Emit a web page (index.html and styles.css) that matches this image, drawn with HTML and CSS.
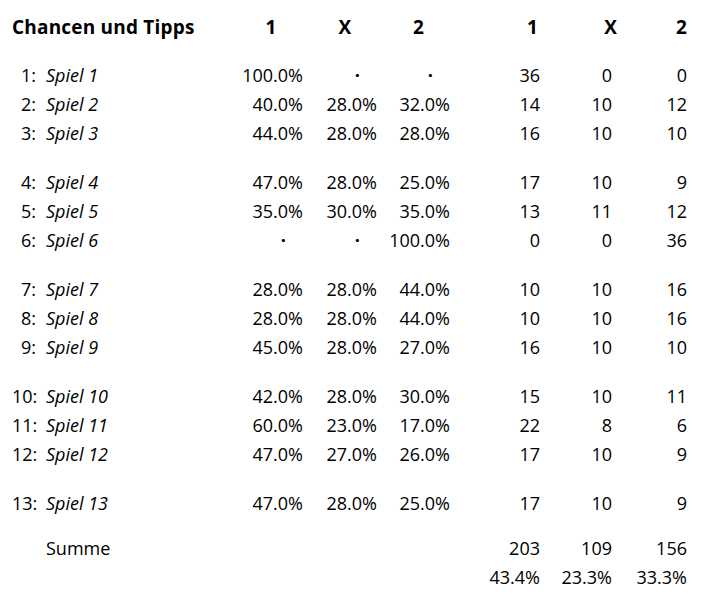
FILE: index.html
```html
<!DOCTYPE html>
<html lang="de">
<head>
<meta charset="utf-8">
<title>Chancen und Tipps</title>
<link rel="stylesheet" href="styles.css">
</head>
<body>
<div class="sheet">
  <div class="row head">
    <div class="title">Chancen und Tipps</div>
    <div class="pct">1</div><div class="pct">X</div><div class="pct">2</div>
    <div class="cnt h1">1</div><div class="cnt hx">X</div><div class="cnt">2</div>
  </div>

  <div class="group">
    <div class="row"><div class="num">1:</div><div class="name">Spiel 1</div><div class="pct">100.0%</div><div class="pct dot">·</div><div class="pct dot">·</div><div class="cnt">36</div><div class="cnt">0</div><div class="cnt">0</div></div>
    <div class="row"><div class="num">2:</div><div class="name">Spiel 2</div><div class="pct">40.0%</div><div class="pct">28.0%</div><div class="pct">32.0%</div><div class="cnt">14</div><div class="cnt">10</div><div class="cnt">12</div></div>
    <div class="row"><div class="num">3:</div><div class="name">Spiel 3</div><div class="pct">44.0%</div><div class="pct">28.0%</div><div class="pct">28.0%</div><div class="cnt">16</div><div class="cnt">10</div><div class="cnt">10</div></div>
  </div>

  <div class="group">
    <div class="row"><div class="num">4:</div><div class="name">Spiel 4</div><div class="pct">47.0%</div><div class="pct">28.0%</div><div class="pct">25.0%</div><div class="cnt">17</div><div class="cnt">10</div><div class="cnt">9</div></div>
    <div class="row"><div class="num">5:</div><div class="name">Spiel 5</div><div class="pct">35.0%</div><div class="pct">30.0%</div><div class="pct">35.0%</div><div class="cnt">13</div><div class="cnt">11</div><div class="cnt">12</div></div>
    <div class="row"><div class="num">6:</div><div class="name">Spiel 6</div><div class="pct dot">·</div><div class="pct dot">·</div><div class="pct">100.0%</div><div class="cnt">0</div><div class="cnt">0</div><div class="cnt">36</div></div>
  </div>

  <div class="group">
    <div class="row"><div class="num">7:</div><div class="name">Spiel 7</div><div class="pct">28.0%</div><div class="pct">28.0%</div><div class="pct">44.0%</div><div class="cnt">10</div><div class="cnt">10</div><div class="cnt">16</div></div>
    <div class="row"><div class="num">8:</div><div class="name">Spiel 8</div><div class="pct">28.0%</div><div class="pct">28.0%</div><div class="pct">44.0%</div><div class="cnt">10</div><div class="cnt">10</div><div class="cnt">16</div></div>
    <div class="row"><div class="num">9:</div><div class="name">Spiel 9</div><div class="pct">45.0%</div><div class="pct">28.0%</div><div class="pct">27.0%</div><div class="cnt">16</div><div class="cnt">10</div><div class="cnt">10</div></div>
  </div>

  <div class="group">
    <div class="row"><div class="num">10:</div><div class="name">Spiel 10</div><div class="pct">42.0%</div><div class="pct">28.0%</div><div class="pct">30.0%</div><div class="cnt">15</div><div class="cnt">10</div><div class="cnt">11</div></div>
    <div class="row"><div class="num">11:</div><div class="name">Spiel 11</div><div class="pct">60.0%</div><div class="pct">23.0%</div><div class="pct">17.0%</div><div class="cnt">22</div><div class="cnt">8</div><div class="cnt">6</div></div>
    <div class="row"><div class="num">12:</div><div class="name">Spiel 12</div><div class="pct">47.0%</div><div class="pct">27.0%</div><div class="pct">26.0%</div><div class="cnt">17</div><div class="cnt">10</div><div class="cnt">9</div></div>
  </div>

  <div class="group">
    <div class="row"><div class="num">13:</div><div class="name">Spiel 13</div><div class="pct">47.0%</div><div class="pct">28.0%</div><div class="pct">25.0%</div><div class="cnt">17</div><div class="cnt">10</div><div class="cnt">9</div></div>
  </div>

  <div class="group sum">
    <div class="row"><div class="num"></div><div class="label">Summe</div><div class="pct"></div><div class="pct"></div><div class="pct"></div><div class="cnt">203</div><div class="cnt">109</div><div class="cnt">156</div></div>
    <div class="row"><div class="num"></div><div class="label"></div><div class="pct"></div><div class="pct"></div><div class="pct"></div><div class="cnt">43.4%</div><div class="cnt">23.3%</div><div class="cnt">33.3%</div></div>
  </div>
</div>
</body>
</html>
```

FILE: styles.css
```css
html, body {
  margin: 0;
  padding: 0;
  background: #ffffff;
}

body {
  font-family: "Open Sans", "Noto Sans", sans-serif;
  font-size: 18px;
  color: #000000;
}

.sheet {
  padding: 13px 0 0 12px;
  display: flex;
  flex-direction: column;
}

.row {
  display: grid;
  grid-template-columns: 24px 193px 74px 74px 73px 90px 72px 75px;
  height: 29px;
  line-height: 29px;
  white-space: nowrap;
}

.head {
  font-weight: 700;
  font-size: 19px;
  letter-spacing: 0.2px;
  margin-bottom: 19px;
}

.head .title {
  grid-column: 1 / 3;
}

.head .pct {
  text-align: center;
  padding-left: 10px;
}

.head .cnt.h1 {
  padding-right: 2px;
}

.head .cnt.hx {
  margin-right: -5px;
}

.group {
  display: flex;
  flex-direction: column;
  margin-bottom: 20px;
}

.group.sum {
  margin-top: -4px;
}

.num {
  text-align: right;
}

.name {
  font-style: italic;
  padding-left: 10px;
}

.label {
  padding-left: 10px;
}

.pct, .cnt {
  text-align: right;
}

.dot {
  font-weight: 700;
  padding-right: 17px;
}
```
